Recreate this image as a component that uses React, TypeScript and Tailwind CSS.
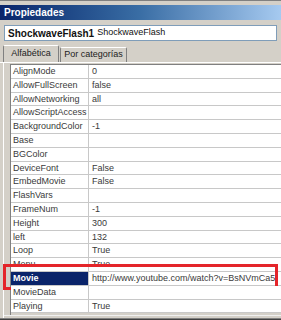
const rows: [string, string][] = [
  ["AlignMode", "0"],
  ["AllowFullScreen", "false"],
  ["AllowNetworking", "all"],
  ["AllowScriptAccess", ""],
  ["BackgroundColor", "-1"],
  ["Base", ""],
  ["BGColor", ""],
  ["DeviceFont", "False"],
  ["EmbedMovie", "False"],
  ["FlashVars", ""],
  ["FrameNum", "-1"],
  ["Height", "300"],
  ["left", "132"],
  ["Loop", "True"],
  ["Menu", "True"],
  ["Movie", "http://www.youtube.com/watch?v=BsNVmCa5"],
  ["MovieData", ""],
  ["Playing", "True"],
];

function Row({ name, value }: { name: string; value: string }) {
  const selected = name === "Movie";
  return (
    <div className="relative flex h-[13.8px] border-b border-[#c8c8c8]">
      <div
        className={
          selected
            ? "w-[77px] shrink-0 bg-[#0a246a] pl-[2px] text-[9px] font-bold leading-[13px] text-white"
            : "w-[77px] shrink-0 bg-white pl-[2px] text-[9px] leading-[13px] text-[#3a3a3a]"
        }
      >
        {name}
      </div>
      <div className="w-px shrink-0 bg-[#c8c8c8]" />
      <div className="flex-1 overflow-hidden whitespace-nowrap bg-white pl-[3px] text-[9px] leading-[13px] text-[#3a3a3a]">
        {value}
      </div>
      {selected && (
        <div className="pointer-events-none absolute left-[-8px] top-[-8px] h-[26px] w-[275px] border-[3px] border-[#e4252a]" />
      )}
    </div>
  );
}

export default function App() {
  return (
    <div
      className="flex h-[320px] w-[281px] flex-col overflow-hidden bg-[#d4d0c8]"
      style={{ fontFamily: '"Liberation Sans", Arial, sans-serif' }}
    >
      <div className="h-[1px] bg-[#808080]" />
      <div className="h-[4px]" />
      <div className="flex h-[15px] items-center bg-gradient-to-r from-[#0a246a] via-[#3a6ea5] to-[#a6caf0] pl-[4px] text-[10px] font-bold text-white">
        Propiedades
      </div>
      <div className="h-[5px]" />
      <div className="mx-[4px] flex h-[16px] items-center border border-[#7f9db9] bg-white pl-[3px] text-[#111]">
        <span className="text-[10px] font-bold">ShockwaveFlash1</span>
        <span className="ml-[3px] text-[9px]">ShockwaveFlash</span>
      </div>
      <div className="h-[3px]" />
      <div className="flex h-[18px] items-end pl-[3px]">
        <div className="flex h-[17px] w-[56px] items-center justify-center rounded-t-[2px] border-x border-t border-x-[#808080] border-t-white bg-[#d4d0c8] text-[9px] text-[#222]">
          Alfabética
        </div>
        <div className="ml-[1px] flex h-[15px] w-[67px] items-center justify-center rounded-t-[2px] border-x border-t border-x-[#808080] border-t-white bg-[#d4d0c8] text-[9px] text-[#222]">
          Por categorías
        </div>
      </div>
      <div className="flex flex-1 border-t border-white pl-[3px]">
        <div className="flex flex-1 flex-col border-l border-white pt-[1px]">
          <div className="flex flex-1">
            <div className="w-[7px] border-r border-[#808080]" />
            <div className="flex flex-1 flex-col border-t border-[#808080] bg-[#d4d0c8]">
              {rows.map(([n, v]) => (
                <Row key={n} name={n} value={v} />
              ))}
            </div>
          </div>
          <div className="h-[3px] border-t border-[#f0f0f0]" />
        </div>
      </div>
      <div className="h-[1px] bg-[#808080]" />
      <div className="h-[1px] bg-[#404040]" />
    </div>
  );
}
